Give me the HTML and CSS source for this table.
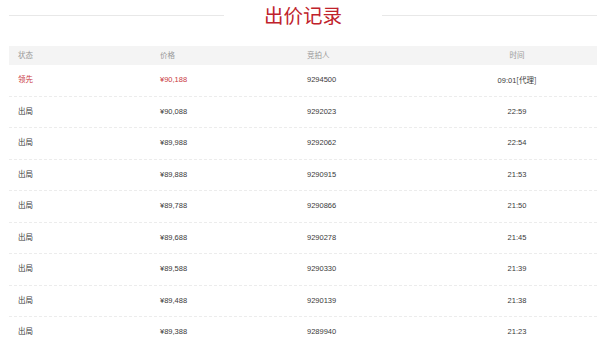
FILE: index.html
```html
<!DOCTYPE html>
<html lang="zh-CN">
<head>
<meta charset="utf-8">
<title>出价记录</title>
<link rel="stylesheet" href="styles.css">
</head>
<body>
<div class="page">
  <div class="title-bar">
    <span class="rule"></span>
    <h2 class="title">出价记录</h2>
    <span class="rule"></span>
  </div>
  <div class="table">
    <div class="row head">
      <div class="cell">状态</div><div class="cell">价格</div><div class="cell">竞拍人</div><div class="cell time">时间</div>
    </div>
    <div class="row lead">
      <div class="cell">领先</div><div class="cell">¥90,188</div><div class="cell dark">9294500</div><div class="cell time dark">09:01<span class="cjk">[代理]</span></div>
    </div>
    <div class="row"><div class="cell">出局</div><div class="cell">¥90,088</div><div class="cell">9292023</div><div class="cell time">22:59</div></div>
    <div class="row"><div class="cell">出局</div><div class="cell">¥89,988</div><div class="cell">9292062</div><div class="cell time">22:54</div></div>
    <div class="row"><div class="cell">出局</div><div class="cell">¥89,888</div><div class="cell">9290915</div><div class="cell time">21:53</div></div>
    <div class="row"><div class="cell">出局</div><div class="cell">¥89,788</div><div class="cell">9290866</div><div class="cell time">21:50</div></div>
    <div class="row"><div class="cell">出局</div><div class="cell">¥89,688</div><div class="cell">9290278</div><div class="cell time">21:45</div></div>
    <div class="row"><div class="cell">出局</div><div class="cell">¥89,588</div><div class="cell">9290330</div><div class="cell time">21:39</div></div>
    <div class="row"><div class="cell">出局</div><div class="cell">¥89,488</div><div class="cell">9290139</div><div class="cell time">21:38</div></div>
    <div class="row"><div class="cell">出局</div><div class="cell">¥89,388</div><div class="cell">9289940</div><div class="cell time">21:23</div></div>
  </div>
</div>
</body>
</html>
```

FILE: styles.css
```css
html, body {
  margin: 0;
  padding: 0;
  background: #ffffff;
}
body {
  font-family: "Liberation Sans", "Noto Sans CJK SC", sans-serif;
  overflow: hidden;
}
.page {
  margin-left: 9px;
  width: 588px;
}
.title-bar {
  display: flex;
  align-items: center;
  height: 30px;
  margin-bottom: 16px;
}
.rule {
  flex: 1;
  height: 1px;
  background: #e8e8e8;
}
.title {
  margin: 0 40px;
  font-family: "Noto Sans CJK SC", sans-serif;
  font-weight: 400;
  font-size: 19.5px;
  line-height: 30px;
  color: #c0222b;
}
.row {
  display: grid;
  grid-template-columns: 142px 147px 139px 1fr;
  align-items: center;
  height: 30.5px;
  border-bottom: 1px dashed #ececec;
  font-size: 7.5px;
  line-height: 10px;
  color: #3a3a3a;
}
.row.head {
  height: 19px;
  border-bottom: none;
  background: #f4f4f4;
  color: #9a9a9a;
}
.cell {
  padding-left: 9px;
  white-space: nowrap;
}
.cell.time {
  padding-left: 0;
  text-align: center;
}
.cjk {
  font-family: "Noto Sans CJK SC", sans-serif;
  position: relative;
  top: 0.5px;
}
.row.lead {
  color: #c9393f;
}
.row.lead .dark {
  color: #3a3a3a;
}
```
